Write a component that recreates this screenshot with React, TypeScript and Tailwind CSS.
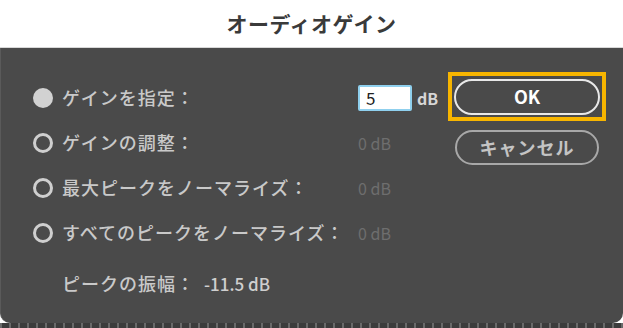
import React from "react";

const font = { fontFamily: '"Noto Sans CJK JP", "Noto Sans", sans-serif' };

function Radio({ filled }: { filled?: boolean }) {
  return filled ? (
    <div className="w-[20px] h-[20px] rounded-full bg-[#d2d2d2] shrink-0" />
  ) : (
    <div className="w-[20px] h-[20px] rounded-full border-[3px] border-[#cfcfcf] shrink-0" />
  );
}

function Row({ label, filled, children }: { label: string; filled?: boolean; children?: React.ReactNode }) {
  return (
    <div className="h-[45px] flex items-center pl-[32px]">
      <Radio filled={filled} />
      <div className="ml-[9px] w-[296px] text-[18px] font-medium tracking-[1px] text-[#c9c9c9] whitespace-nowrap">{label}</div>
      {children}
    </div>
  );
}

function Zero() {
  return <div className="text-[16px] text-[#6e6e6e]">0 dB</div>;
}

export default function App() {
  return (
    <div className="w-[623px] h-[328px] bg-white flex flex-col" style={font}>
      <div className="h-[48px] bg-white rounded-t-[10px] flex items-center justify-center border-b border-[#d8d8d8]">
        <div className="text-[21px] font-bold text-[#3a3a3a] tracking-[0.5px]">オーディオゲイン</div>
      </div>
      <div className="flex-1 bg-[#4a4a4a] rounded-b-[10px] border-l border-[#5a5a5a] flex">
        <div className="w-[447px] pt-[27px] flex flex-col">
          <Row label="ゲインを指定：" filled>
            <div className="w-[54px] h-[26px] bg-white border-2 border-[#8fd0ee] rounded-[2px] flex items-center pl-[6px] text-[17px] text-[#222]">
              5
            </div>
            <div className="ml-[5px] text-[16px] font-bold text-[#d6d6d6]">dB</div>
          </Row>
          <Row label="ゲインの調整：">
            <Zero />
          </Row>
          <Row label="最大ピークをノーマライズ：">
            <Zero />
          </Row>
          <Row label="すべてのピークをノーマライズ：">
            <Zero />
          </Row>
          <div className="mt-[6px] h-[45px] flex items-center pl-[61px]">
            <div className="w-[142px] text-[18px] font-medium tracking-[1px] text-[#c9c9c9] whitespace-nowrap">ピークの振幅：</div>
            <div className="text-[17px] font-medium text-[#cfcfcf]">-11.5 dB</div>
          </div>
        </div>
        <div className="pt-[24px] flex flex-col">
          <div className="w-[158px] h-[49px] border-4 border-[#f7b500] flex items-center justify-center">
            <div className="w-[146px] h-[36px] rounded-full border-2 border-[#e8e8e8] flex items-center justify-center text-[18px] font-bold text-white">
              OK
            </div>
          </div>
          <div className="mt-[9px] ml-[7px] w-[144px] h-[35px] rounded-full border-2 border-[#a8a8a8] flex items-center justify-center text-[18px] font-bold tracking-[1px] text-[#c4c4c4]">
            キャンセル
          </div>
        </div>
      </div>
      <div className="h-[5px] bg-[repeating-linear-gradient(90deg,#6a6a6a_0_2px,#3c3c3c_2px_9px)]" />
    </div>
  );
}
